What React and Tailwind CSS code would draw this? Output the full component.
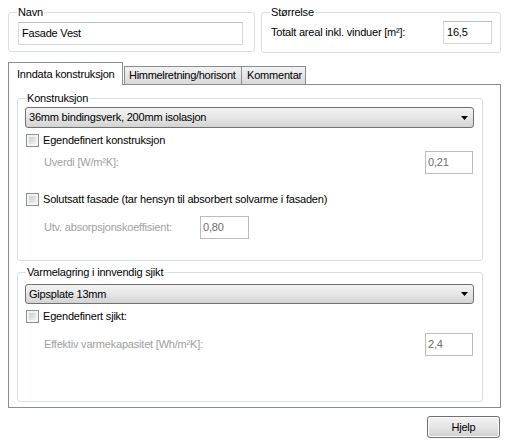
import React from "react";

function Checkbox() {
  return (
    <div className="w-[13px] h-[13px] border border-[#8e8f8f] bg-[#f4f4f4] p-[2px] shrink-0">
      <div className="w-full h-full bg-linear-to-br from-[#c9ccd1] to-[#f0f0f0]" />
    </div>
  );
}

function TextBox({ value, disabled, className = "" }) {
  return (
    <div
      className={
        "h-[23px] bg-white border flex items-center pl-[2px] " +
        (disabled
          ? "border-[#bcbcbc] text-[#6d6d6d] "
          : "border-[#d5d8dd] border-t-[#b9bcc2] text-black ") +
        className
      }
    >
      {value}
    </div>
  );
}

function Select({ value, className = "" }) {
  return (
    <div
      className={
        "rounded-[3px] border border-[#707070] bg-linear-to-b from-[#f3f3f3] via-[#e6e6e6] to-[#d3d3d3] flex items-center pl-[3px] " +
        className
      }
    >
      <span className="flex-1">{value}</span>
      <svg width="7" height="4" viewBox="0 0 7 4" className="mr-[5px]">
        <path d="M0 0h7L3.5 4z" fill="#000" />
      </svg>
    </div>
  );
}

export default function App() {
  return (
    <div className="w-[510px] h-[447px] bg-white font-['Liberation_Sans',Arial,sans-serif] text-[11px] leading-[13px] tracking-[-0.2px] text-black flex flex-col whitespace-nowrap">
      {/* Top row */}
      <div className="flex mt-[6px]">
        <fieldset className="ml-[8px] w-[247px] h-[46px] border border-[#d5dfe5] rounded-[3px] px-0">
          <legend className="ml-[8px] px-[1px] leading-[13px]">Navn</legend>
          <TextBox value="Fasade Vest" className="mt-[3px] ml-[9px] w-[225px] pl-[3px]" />
        </fieldset>
        <fieldset className="ml-[6px] w-[240px] h-[47px] border border-[#d5dfe5] rounded-[3px] px-0">
          <legend className="ml-[8px] px-[1px] leading-[13px]">Størrelse</legend>
          <div className="flex items-center mt-[2px]">
            <span className="ml-[9px]">Totalt areal inkl. vinduer [m²]:</span>
            <TextBox value="16,5" className="ml-auto mr-[8px] w-[49px] pl-[3px]" />
          </div>
        </fieldset>
      </div>

      {/* Tabs */}
      <div className="flex items-end mt-[9px] ml-[8px] h-[22px]">
        <div className="relative z-10 -mb-[1px] h-[23px] w-[115px] border border-b-0 border-[#898c95] bg-white flex items-start pt-[5px] pl-[8px] overflow-hidden">
          Inndata konstruksjon
        </div>
        <div className="ml-[1px] h-[18px] w-[118px] border border-b-0 border-[#898c95] bg-linear-to-b from-[#f2f2f2] to-[#dadada] flex items-start pt-[2px] pl-[4px] overflow-hidden tracking-[-0.3px]">
          Himmelretning/horisont
        </div>
        <div className="-ml-[1px] h-[18px] w-[65px] border border-b-0 border-[#898c95] bg-linear-to-b from-[#f2f2f2] to-[#dadada] flex items-start pt-[2px] pl-[5px] overflow-hidden">
          Kommentar
        </div>
      </div>

      {/* Panel */}
      <div className="ml-[8px] w-[493px] h-[324px] border border-[#898c95] flex flex-col">
        <fieldset className="mt-[7px] ml-[8px] w-[466px] h-[169px] border border-[#d5dfe5] rounded-[3px] px-0">
          <legend className="ml-[8px] px-[1px] leading-[13px]">Konstruksjon</legend>
          <Select value="36mm bindingsverk, 200mm isolasjon" className="mt-[2px] ml-[7px] w-[449px] h-[21px]" />
          <div className="flex items-center mt-[6px] ml-[8px] h-[13px]">
            <Checkbox />
            <span className="ml-[4px]">Egendefinert konstruksjon</span>
          </div>
          <div className="flex items-center mt-[4px]">
            <span className="ml-[26px] text-[#a0a0a0]">Uverdi [W/m²K]:</span>
            <TextBox value="0,21" disabled className="ml-auto mr-[9px] w-[48px]" />
          </div>
          <div className="flex items-center mt-[19px] ml-[8px] h-[13px]">
            <Checkbox />
            <span className="ml-[4px]">Solutsatt fasade (tar hensyn til absorbert solvarme i fasaden)</span>
          </div>
          <div className="flex items-center mt-[10px]">
            <span className="ml-[26px] w-[156px] text-[#a0a0a0]">Utv. absorpsjonskoeffisient:</span>
            <TextBox value="0,80" disabled className="w-[49px]" />
          </div>
        </fieldset>

        <fieldset className="mt-[5px] ml-[8px] w-[466px] h-[136px] border border-[#d5dfe5] rounded-[3px] px-0">
          <legend className="ml-[8px] px-[1px] leading-[13px]">Varmelagring i innvendig sjikt</legend>
          <Select value="Gipsplate 13mm" className="mt-[5px] ml-[7px] w-[449px] h-[20px]" />
          <div className="flex items-center mt-[6px] ml-[8px] h-[13px]">
            <Checkbox />
            <span className="ml-[4px]">Egendefinert sjikt:</span>
          </div>
          <div className="flex items-center mt-[10px]">
            <span className="ml-[26px] text-[#a0a0a0]">Effektiv varmekapasitet [Wh/m²K]:</span>
            <TextBox value="2,4" disabled className="ml-auto mr-[9px] w-[48px]" />
          </div>
        </fieldset>
      </div>

      {/* Button */}
      <div className="flex justify-end mt-[8px] mr-[10px]">
        <button className="w-[73px] h-[22px] rounded-[3px] border border-[#707070] bg-linear-to-b from-[#f2f2f2] via-[#e6e6e6] to-[#cfcfcf] shadow-[inset_0_0_0_1px_#fcfcfc] flex items-center justify-center">
          Hjelp
        </button>
      </div>
    </div>
  );
}
